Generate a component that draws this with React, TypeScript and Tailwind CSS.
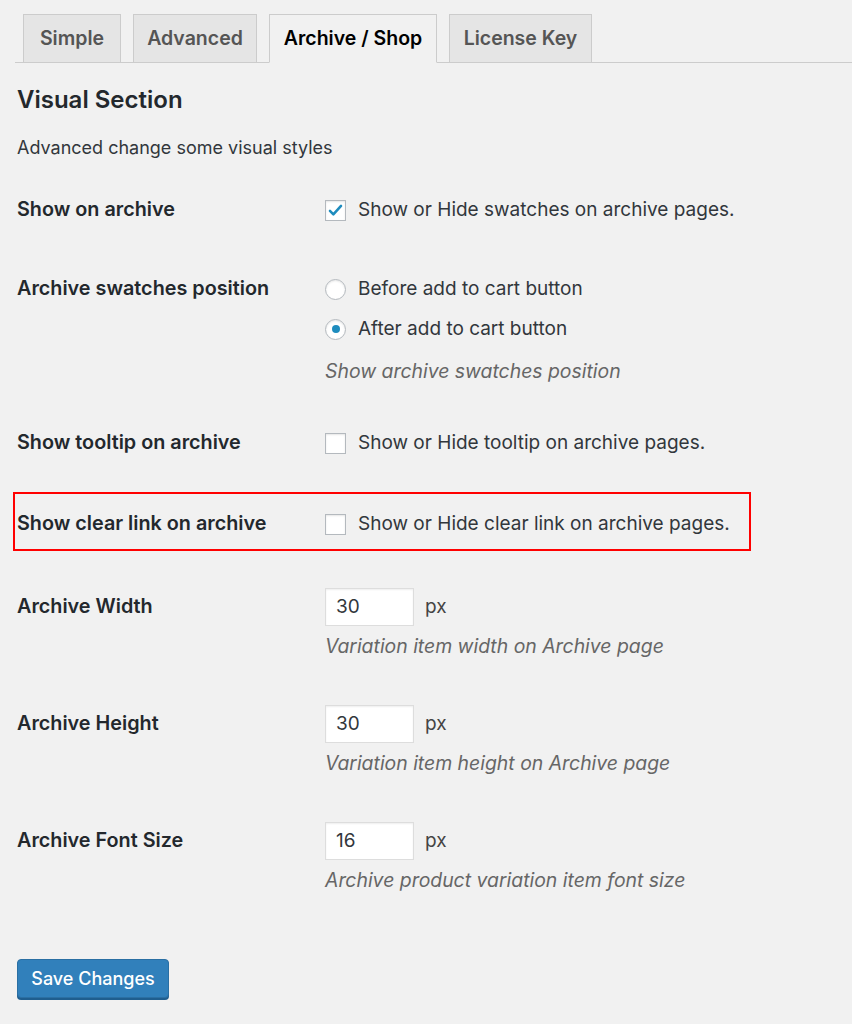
import React from 'react';

const font = { fontFamily: 'Inter, "Noto Sans", sans-serif' };

function Checkbox({ checked }: { checked?: boolean }) {
  return (
    <span className="flex h-[21px] w-[21px] shrink-0 items-center justify-center border border-[#b4b9be] bg-white shadow-[inset_0_1px_2px_rgba(0,0,0,0.1)]">
      {checked && (
        <svg width="17" height="17" viewBox="0 0 20 20">
          <path d="M3.5 10.5l4 4 9-10" fill="none" stroke="#1e8cbe" strokeWidth="3" strokeLinecap="round" strokeLinejoin="round" />
        </svg>
      )}
    </span>
  );
}

function Radio({ checked }: { checked?: boolean }) {
  return (
    <span className="flex h-[21px] w-[21px] shrink-0 items-center justify-center rounded-full border border-[#b4b9be] bg-white shadow-[inset_0_1px_2px_rgba(0,0,0,0.1)]">
      {checked && <span className="h-[8px] w-[8px] rounded-full bg-[#1e8cbe]" />}
    </span>
  );
}

function Label({ children }: { children: React.ReactNode }) {
  return (
    <div className="flex h-[40px] w-[308px] shrink-0 items-center text-[19.8px] font-semibold text-[#23282d]">
      {children}
    </div>
  );
}

function Desc({ children, className = '' }: { children: React.ReactNode; className?: string }) {
  return <div className={`text-[19.4px] italic leading-[26px] text-[#666] ${className}`}>{children}</div>;
}

function NumberField({ value }: { value: string }) {
  return (
    <div className="flex h-[40px] items-center gap-[11px]">
      <div className="flex h-[38px] w-[89px] items-center border border-[#ddd] bg-white pl-[10px] text-[19px] text-[#32373c] shadow-[inset_0_1px_2px_rgba(0,0,0,0.07)]">
        {value}
      </div>
      <span className="text-[19px] text-[#444]">px</span>
    </div>
  );
}

const tabs = [
  { label: 'Simple', width: 'w-[98px]' },
  { label: 'Advanced', width: 'w-[124px]' },
  { label: 'Archive / Shop', width: 'w-[168px]' },
  { label: 'License Key', width: 'w-[143px]' },
];

export default function App() {
  return (
    <div className="min-h-[1024px] w-[852px] overflow-hidden bg-[#f1f1f1] text-[#32373c]" style={font}>
      {/* tabs */}
      <div className="ml-[15px] flex gap-[12px] border-b border-[#ccc] pl-[8px] pt-[14px]">
        {tabs.map((t) => {
          const active = t.label === 'Archive / Shop';
          return (
            <div
              key={t.label}
              className={`-mb-px flex h-[49px] items-center justify-center border border-[#ccc] text-[19.5px] font-semibold ${t.width} ${
                active ? 'border-b-[#f1f1f1] bg-[#f1f1f1] text-black' : 'bg-[#e5e5e5] text-[#555]'
              }`}
            >
              {t.label}
            </div>
          );
        })}
      </div>

      <div className="pl-[17px]">
        <h2 className="mt-[22px] text-[24px] font-semibold leading-[30px] text-[#23282d]">Visual Section</h2>
        <p className="mt-[20px] text-[18px] leading-[26px] text-[#32373c]">Advanced change some visual styles</p>

        {/* show on archive */}
        <div className="mt-[29px] flex">
          <Label>Show on archive</Label>
          <div className="flex h-[40px] items-center gap-[12px] text-[19px]">
            <Checkbox checked />
            <span>Show or Hide swatches on archive pages.</span>
          </div>
        </div>

        {/* position */}
        <div className="mt-[39px] flex">
          <Label>Archive swatches position</Label>
          <div>
            <div className="flex h-[40px] items-center gap-[12px] text-[19px]">
              <Radio />
              <span>Before add to cart button</span>
            </div>
            <div className="flex h-[40px] items-center gap-[12px] text-[19px]">
              <Radio checked />
              <span>After add to cart button</span>
            </div>
            <Desc className="mt-[9px]">Show archive swatches position</Desc>
          </div>
        </div>

        {/* tooltip */}
        <div className="mt-[39px] flex">
          <Label>Show tooltip on archive</Label>
          <div className="flex h-[40px] items-center gap-[12px] text-[19px]">
            <Checkbox />
            <span>Show or Hide tooltip on archive pages.</span>
          </div>
        </div>

        {/* clear link */}
        <div className="relative mt-[41px] flex">
          <Label>Show clear link on archive</Label>
          <div className="flex h-[40px] items-center gap-[12px] text-[19px]">
            <Checkbox />
            <span>Show or Hide clear link on archive pages.</span>
          </div>
          <div className="pointer-events-none absolute -left-[4px] -top-[12px] h-[59px] w-[738px] border-2 border-[#f00]" />
        </div>

        {/* width */}
        <div className="mt-[43px] flex">
          <Label>Archive Width</Label>
          <div>
            <NumberField value="30" />
            <Desc className="mt-[6px]">Variation item width on Archive page</Desc>
          </div>
        </div>

        {/* height */}
        <div className="mt-[45px] flex">
          <Label>Archive Height</Label>
          <div>
            <NumberField value="30" />
            <Desc className="mt-[6px]">Variation item height on Archive page</Desc>
          </div>
        </div>

        {/* font size */}
        <div className="mt-[45px] flex">
          <Label>Archive Font Size</Label>
          <div>
            <NumberField value="16" />
            <Desc className="mt-[6px]">Archive product variation item font size</Desc>
          </div>
        </div>

        <button className="mt-[66px] flex h-[39px] w-[152px] items-center justify-center rounded-[4px] border border-[#2a6fa3] bg-[#3180bb] text-[18px] font-medium text-white shadow-[0_2px_0_#1f5e8f]">
          Save Changes
        </button>
      </div>
    </div>
  );
}
